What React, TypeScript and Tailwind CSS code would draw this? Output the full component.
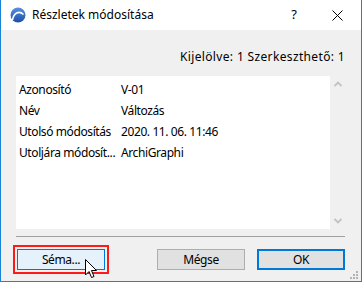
import React from 'react';

const rows = [
  { label: 'Azonosító', value: 'V-01' },
  { label: 'Név', value: 'Változás' },
  { label: 'Utolsó módosítás', value: '2020. 11. 06. 11:46' },
  { label: 'Utoljára módosít...', value: 'ArchiGraphi' },
];

const AppIcon = () => (
  <svg width="16" height="16" viewBox="0 0 16 16">
    <defs>
      <linearGradient id="ac" x1="0" y1="0" x2="0" y2="1">
        <stop offset="0" stopColor="#5a8fe0" />
        <stop offset="1" stopColor="#1c4fa8" />
      </linearGradient>
    </defs>
    <circle cx="8" cy="8" r="7.5" fill="url(#ac)" />
    <path d="M2.5 13 C3.5 6 9 3 13.5 7.5" stroke="#fff" strokeWidth="1.6" fill="none" />
  </svg>
);

const Cursor = () => (
  <svg width="13" height="20" viewBox="0 0 13 20" className="absolute left-[84px] top-[259px]">
    <path d="M0.5 0.5 L0.5 16 L4 12.5 L6.5 18.5 L9 17.5 L6.5 11.5 L11.5 11.5 Z" fill="#fff" stroke="#000" strokeWidth="1" strokeLinejoin="miter" />
  </svg>
);

export default function App() {
  return (
    <div className="relative w-[362px] h-[282px] flex flex-col border-x border-b border-[#1883d7] bg-[#f0f0f0] font-['Segoe_UI','Noto_Sans',sans-serif] text-[12px] tracking-[-0.4px] text-black">
      {/* title bar */}
      <div className="h-[30px] bg-white flex items-center tracking-normal">
        <div className="ml-[9px] mr-[6px] flex items-center"><AppIcon /></div>
        <span className="text-[12px] leading-none">Részletek módosítása</span>
        <span className="ml-auto mr-[35px] text-[13px]">?</span>
        <svg width="11" height="11" viewBox="0 0 11 11" className="mr-[18px]">
          <path d="M0.5 0.5 L10.5 10.5 M10.5 0.5 L0.5 10.5" stroke="#000" strokeWidth="1" />
        </svg>
      </div>

      {/* selection info */}
      <div className="mt-[19px] h-[16px] flex justify-end pr-[16px] leading-[16px] tracking-[0.35px]">
        Kijelölve: 1 Szerkeszthető: 1
      </div>

      {/* list */}
      <div className="mt-[11px] ml-[15px] h-[153px] flex">
        <div className="w-[314px] bg-white pt-[3px]">
          {rows.map((r) => (
            <div key={r.label} className="h-[21px] flex items-center">
              <span className="w-[105px] pl-[3px] whitespace-nowrap">{r.label}</span>
              <span>{r.value}</span>
            </div>
          ))}
        </div>
        <div className="w-[16px] flex flex-col items-center justify-between py-[5px]">
          <svg width="8" height="6" viewBox="0 0 8 6"><path d="M0.5 5 L4 1.5 L7.5 5" stroke="#c2c2c2" strokeWidth="1.8" fill="none" /></svg>
          <svg width="8" height="6" viewBox="0 0 8 6"><path d="M0.5 1 L4 4.5 L7.5 1" stroke="#c2c2c2" strokeWidth="1.8" fill="none" /></svg>
        </div>
      </div>

      {/* separator */}
      <div className="mt-[7px] ml-[15px] mr-[16px] h-px bg-[#a0a0a0]" />

      {/* buttons */}
      <div className="mt-[12px] ml-[16px] mr-[16px] flex">
        <button className="w-[88px] h-[21px] border border-[#0078d7] bg-[#e5f1fb] outline-2 outline-offset-2 outline-[#ff1a1a]">Séma...</button>
        <button className="ml-auto w-[88px] h-[21px] border border-[#adadad] bg-[#e1e1e1]">Mégse</button>
        <button className="ml-[12px] w-[88px] h-[21px] border-2 border-[#0078d7] bg-[#e1e1e1]">OK</button>
      </div>

      {/* resize grip */}
      <div className="absolute right-[3px] bottom-[2px] grid grid-cols-3 gap-px w-[8px] h-[8px]">
        <span />
        <span />
        <span className="bg-[#b4b4b4] w-[2px] h-[2px]" />
        <span />
        <span className="bg-[#b4b4b4] w-[2px] h-[2px]" />
        <span className="bg-[#b4b4b4] w-[2px] h-[2px]" />
        <span className="bg-[#b4b4b4] w-[2px] h-[2px]" />
        <span className="bg-[#b4b4b4] w-[2px] h-[2px]" />
        <span className="bg-[#b4b4b4] w-[2px] h-[2px]" />
      </div>

      <Cursor />
    </div>
  );
}
